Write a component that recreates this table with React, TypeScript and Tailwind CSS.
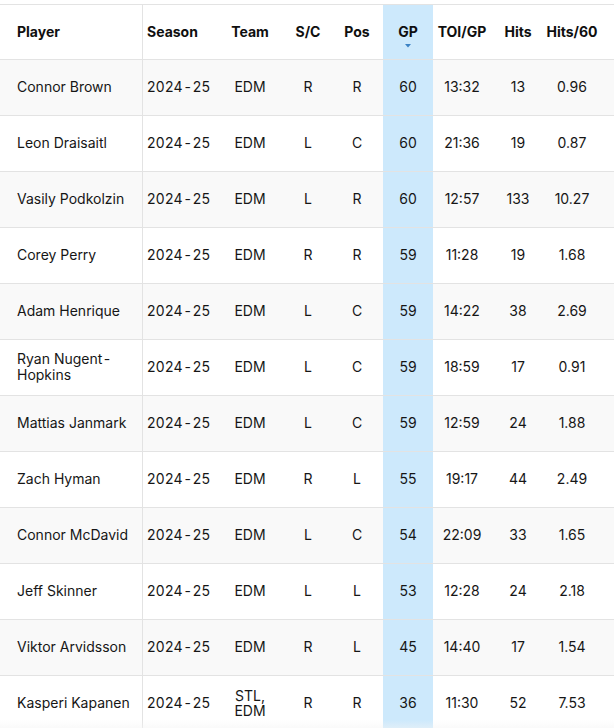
const rows = [
  ["Connor Brown", "2024-25", "EDM", "R", "R", "60", "13:32", "13", "0.96"],
  ["Leon Draisaitl", "2024-25", "EDM", "L", "C", "60", "21:36", "19", "0.87"],
  ["Vasily Podkolzin", "2024-25", "EDM", "L", "R", "60", "12:57", "133", "10.27"],
  ["Corey Perry", "2024-25", "EDM", "R", "R", "59", "11:28", "19", "1.68"],
  ["Adam Henrique", "2024-25", "EDM", "L", "C", "59", "14:22", "38", "2.69"],
  ["Ryan Nugent-Hopkins", "2024-25", "EDM", "L", "C", "59", "18:59", "17", "0.91"],
  ["Mattias Janmark", "2024-25", "EDM", "L", "C", "59", "12:59", "24", "1.88"],
  ["Zach Hyman", "2024-25", "EDM", "R", "L", "55", "19:17", "44", "2.49"],
  ["Connor McDavid", "2024-25", "EDM", "L", "C", "54", "22:09", "33", "1.65"],
  ["Jeff Skinner", "2024-25", "EDM", "L", "L", "53", "12:28", "24", "2.18"],
  ["Viktor Arvidsson", "2024-25", "EDM", "R", "L", "45", "14:40", "17", "1.54"],
  ["Kasperi Kapanen", "2024-25", "STL, EDM", "R", "R", "36", "11:30", "52", "7.53"],
];

const headers = ["Player", "Season", "Team", "S/C", "Pos", "GP", "TOI/GP", "Hits", "Hits/60"];

const grid = "grid grid-cols-[143px_72px_70px_46px_52px_50px_58px_54px_54px_15px]";

// hyphens in the source render with a little air on both sides
function Hyphenated({ value }: { value: string }) {
  const parts = value.split("-");
  if (parts.length < 2) return <>{value}</>;
  return (
    <span>
      {parts[0]}
      <span className="mx-[1.5px]">-</span>
      {parts[1]}
    </span>
  );
}

export default function App() {
  return (
    <div className="bg-white pt-1 text-[14px] text-[#161616] relative" style={{ fontFamily: "Inter, 'Noto Sans', sans-serif" }}>
      <div className={`${grid} h-[56px] border-t border-b border-[#e3e3e3] font-bold text-[#0f0f0f]`}>
        {headers.map((h, i) => (
          <div
            key={h}
            className={
              i === 0
                ? "flex items-center pl-[17px] pb-[2px] border-r border-[#e3e3e3]"
                : i === 1
                ? "flex items-center pl-[4px] pb-[2px]"
                : i === 5
                ? "relative flex items-center justify-center pb-[2px] bg-[#cde9fc]"
                : "flex items-center justify-center pb-[2px]"
            }
          >
            {h}
            {i === 5 && (
              <svg className="absolute left-1/2 -translate-x-1/2 top-[39px]" width="6" height="4" viewBox="0 0 6 4">
                <path d="M0 0h6L3 3.5z" fill="#3b82c4" />
              </svg>
            )}
          </div>
        ))}
        <div />
      </div>
      {rows.map((r, ri) => (
        <div key={ri} className={`${grid} h-[56px] border-b border-[#e3e3e3] ${ri % 2 === 0 ? "bg-[#f9f9f9]" : "bg-white"}`}>
          {r.map((c, i) => (
            <div
              key={i}
              className={
                i === 0
                  ? "flex items-center pl-[17px] pr-3 pb-[2px] leading-[16px] border-r border-[#e3e3e3]"
                  : i === 1
                  ? "flex items-center pl-[4px] pb-[2px] tracking-[0.3px]"
                  : i === 5
                  ? "flex items-center justify-center pb-[2px] bg-[#cde9fc]"
                  : "flex items-center justify-center text-center pb-[2px] leading-[15px] px-2"
              }
            >
              {i <= 1 ? <Hyphenated value={c} /> : c}
            </div>
          ))}
          <div />
        </div>
      ))}
      <div className="pointer-events-none absolute left-0 right-0 top-[720px] h-[12px] bg-gradient-to-b from-transparent to-[#f4f4f4]/70" />
    </div>
  );
}
